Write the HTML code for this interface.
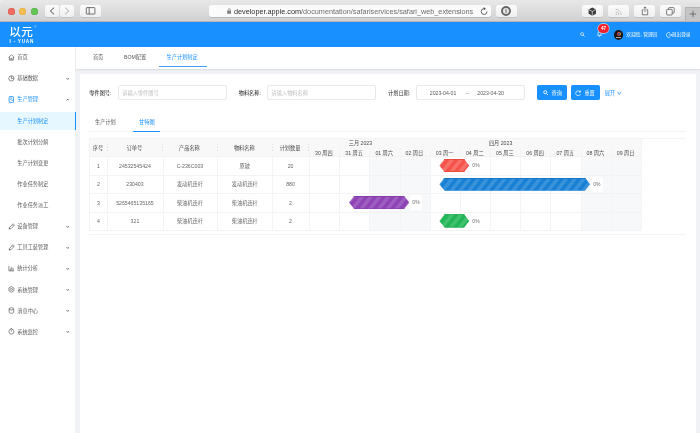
<!DOCTYPE html>
<html lang="zh-CN">
<head>
<meta charset="utf-8">
<title>生产计划制定</title>
<style>
*{box-sizing:border-box;margin:0;padding:0}
html,body{width:700px;height:433px;overflow:hidden;background:#f0f2f5}
body{position:relative;font-family:"Liberation Sans","Noto Sans CJK SC",sans-serif;font-size:5.2px;color:#595959;line-height:1}
.abs{position:absolute}
.t{position:absolute;white-space:nowrap;line-height:8px;height:8px;margin-top:-4px}
/* browser chrome */
#chrome{left:0;top:0;width:700px;height:21.6px;background:linear-gradient(#e9e8e9,#d2d1d2);border-bottom:.6px solid #b9b4ae;border-radius:2.5px 2.5px 0 0}
.tl{width:7.2px;height:7.2px;border-radius:50%;top:7.6px}
.cb{top:5.3px;height:11.7px;border-radius:2.2px;background:linear-gradient(#fbfbfb,#f0f0f0);box-shadow:0 .4px .5px rgba(0,0,0,.18)}
#url{left:208.9px;top:5.2px;width:281.8px;height:11.8px;border-radius:2.2px;background:#fbfbfb;box-shadow:0 .4px .5px rgba(0,0,0,.25)}
/* header */
#hdr{left:0;top:21.8px;width:700px;height:25px;background:#1890ff}
/* sidebar */
#side{left:0;top:46.8px;width:76.4px;height:387px;background:#fff;border-right:1px solid #f0f0f0}
.mi{position:absolute;left:0;width:76px;height:17.6px}
.mi .t{top:8.8px;left:17.3px;color:#595959}
.mi.sub .t{color:#595959}
.mi svg{position:absolute}
.arr{position:absolute;left:65.9px;top:7.1px;width:3.6px;height:3.6px}
/* top tabs */
#tabs{left:76.4px;top:46.8px;width:623.6px;height:22px;background:#fff;box-shadow:0 .5px 1.2px rgba(0,21,41,.1)}
#card{left:80.3px;top:74.4px;width:615.4px;height:360px;background:#fff}
.inp{position:absolute;top:85.4px;height:14.4px;border:1px solid #e9e9e9;border-radius:2px;background:#fff}
.btn{position:absolute;top:85.4px;height:14.4px;border-radius:1.8px;background:#1890ff}
.ph{color:#bfbfbf}
.lbl{color:#262626}
/* table */
.hl{position:absolute;background:#f3f3f3;height:1px}
.vl{position:absolute;background:#f4f4f4;width:1px}
.c{position:absolute;white-space:nowrap;line-height:8px;height:8px;margin-top:-4px;text-align:center;color:#666}
</style>
</head>
<body>
<div id="root" style="position:absolute;left:0;top:0;width:700px;height:433px;will-change:transform">
<!-- ===== Browser chrome ===== -->
<div id="chrome" class="abs"></div>
<div class="abs tl" style="left:7.6px;background:#ed6b5f;box-shadow:inset 0 0 0 .4px #d5584c"></div>
<div class="abs tl" style="left:19px;background:#f5be4f;box-shadow:inset 0 0 0 .4px #d9a43d"></div>
<div class="abs tl" style="left:30.8px;background:#62c554;box-shadow:inset 0 0 0 .4px #52a943"></div>
<div class="abs cb" style="left:45px;width:13.8px"></div>
<div class="abs cb" style="left:60px;width:14px"></div>
<svg class="abs" style="left:45px;top:5.3px" width="29" height="11.7" viewBox="0 0 29 11.7"><path d="M8.7 3 5.4 6.05 8.7 9.1" fill="none" stroke="#3c3c3c" stroke-width=".95" stroke-linecap="round" stroke-linejoin="round"/><path d="M20.5 3 23.8 6.05 20.5 9.1" fill="none" stroke="#a4a4a4" stroke-width=".95" stroke-linecap="round" stroke-linejoin="round"/></svg>
<div class="abs cb" style="left:80px;width:21px"></div>
<svg class="abs" style="left:80px;top:5.3px" width="21" height="11.7" viewBox="0 0 21 11.7"><rect x="6.3" y="2.6" width="8.6" height="6.5" rx=".7" fill="none" stroke="#444" stroke-width=".75"/><path d="M9.2 2.6v6.5" stroke="#444" stroke-width=".75"/></svg>
<div id="url" class="abs"></div>
<svg class="abs" style="left:226.8px;top:8.2px" width="4.6" height="6" viewBox="0 0 4.6 6"><rect x=".2" y="2.5" width="4.2" height="3.3" rx=".4" fill="#7d7d7d"/><path d="M1.1 2.6V1.8a1.2 1.2 0 0 1 2.4 0v.8" fill="none" stroke="#7d7d7d" stroke-width=".6"/></svg>
<div class="t" id="urltxt" style="left:234px;top:11.9px;font-size:7.27px;color:#2e2e2e;letter-spacing:0">developer.apple.com<span style="color:#6d6d6d">/documentation/safariservices/safari_web_extensions</span></div>
<svg class="abs" style="left:480.2px;top:6.6px" width="8.4" height="8.4" viewBox="0 0 7 7"><path d="M5.9 3.8A2.45 2.45 0 1 1 3.4 1.35" fill="none" stroke="#4c4c4c" stroke-width=".7"/><path d="M3.2 0 4.9 1.4 3.2 2.8z" fill="#4c4c4c"/></svg>
<div class="abs cb" style="left:496px;width:20.7px"></div>
<svg class="abs" style="left:501.4px;top:5.9px" width="10" height="10" viewBox="0 0 10 10"><circle cx="5" cy="5" r="4" fill="#e6e6e6" stroke="#676767" stroke-width="1.9"/><path d="M5 3.2v3.6" stroke="#4a4a4a" stroke-width=".8"/></svg>
<div class="abs cb" style="left:582px;width:21px"></div>
<div class="abs cb" style="left:608px;width:21px"></div>
<div class="abs cb" style="left:634px;width:21px"></div>
<div class="abs cb" style="left:660px;width:21px"></div>
<svg class="abs" style="left:588.3px;top:6.6px" width="8.6" height="9.2" viewBox="0 0 8.6 9.2"><path d="M4.3.4 8 2.4v4.4L4.3 8.8.6 6.8V2.4z" fill="#3d3d3d"/><path d="M.6 2.4 4.3 4.5 8 2.4M4.3 4.5v4.3" fill="none" stroke="#e6e6e6" stroke-width=".7"/></svg>
<svg class="abs" style="left:615px;top:7.6px" width="7.5" height="7.5" viewBox="0 0 7.5 7.5"><circle cx="1.3" cy="6.2" r=".8" fill="#b9b9b9"/><path d="M.6 3.7A3.2 3.2 0 0 1 3.8 6.9M.6 1.3A5.6 5.6 0 0 1 6.2 6.9" fill="none" stroke="#b9b9b9" stroke-width=".85"/></svg>
<svg class="abs" style="left:640.5px;top:6.2px" width="8" height="10" viewBox="0 0 8 10"><path d="M2.6 3.8H1.3v5h5.4v-5H5.4" fill="none" stroke="#4b4b4b" stroke-width=".7"/><path d="M4 6V1M2.5 2.3 4 .8l1.5 1.5" fill="none" stroke="#4b4b4b" stroke-width=".7"/></svg>
<svg class="abs" style="left:666px;top:7.2px" width="9" height="9" viewBox="0 0 9 9"><rect x=".6" y="2.4" width="5.6" height="5.6" rx=".8" fill="#f6f6f6" stroke="#4b4b4b" stroke-width=".7"/><path d="M2.6 2.4V1.4a.8.8 0 0 1 .8-.8h4a.8.8 0 0 1 .8.8v4a.8.8 0 0 1-.8.8H6.3" fill="none" stroke="#4b4b4b" stroke-width=".7"/></svg>
<div class="abs" style="left:685px;top:7px;width:15px;height:14.4px;background:#c6c5c6;border-left:.5px solid #b4b3b4;border-top:.5px solid #b4b3b4"></div>
<svg class="abs" style="left:688.5px;top:10.3px" width="8" height="8" viewBox="0 0 8 8"><path d="M4 .8v6.4M.8 4h6.4" stroke="#5a5a5a" stroke-width=".8"/></svg>

<!-- ===== App header ===== -->
<div id="hdr" class="abs"></div>
<div class="t" style="left:9.2px;top:32.2px;font-size:11.6px;font-weight:500;color:#fff;line-height:14px;height:14px;margin-top:-7px;letter-spacing:.4px">以元</div>
<div class="t" style="left:34.2px;top:26.7px;font-size:3px;color:#cfe6ff;line-height:4px;height:4px;margin-top:-2px">®</div>
<div class="t" style="left:9.6px;top:41.6px;font-size:4.7px;font-weight:700;color:#fff;letter-spacing:.72px;line-height:6px;height:6px;margin-top:-3px">I - YUAN</div>
<svg class="abs" style="left:580.3px;top:32px" width="5" height="5" viewBox="0 0 5 5"><circle cx="2" cy="2" r="1.5" fill="none" stroke="#fff" stroke-width=".6"/><path d="M3.1 3.1 4.6 4.6" stroke="#fff" stroke-width=".7"/></svg>
<svg class="abs" style="left:596.8px;top:31px" width="5" height="6" viewBox="0 0 5 6"><path d="M1 4.3V2.3a1.5 1.5 0 0 1 3 0v2M.5 4.4h4" fill="none" stroke="#fff" stroke-width=".7"/><path d="M2 5.3h1" stroke="#fff" stroke-width=".7"/></svg>
<div class="abs" style="left:598px;top:24.1px;width:11.2px;height:8.8px;border-radius:4.4px;background:#f5222d;box-shadow:0 0 0 .4px #fff"></div>
<div class="t" style="left:598px;width:11.2px;text-align:center;top:28.9px;font-size:4.6px;font-weight:700;color:#fff">47</div>
<div class="abs" style="left:614.1px;top:30.3px;width:9.2px;height:9.6px;border-radius:50%;background:#1d1418;overflow:hidden"><div class="abs" style="left:2.5px;top:1.5px;width:4.2px;height:4.2px;border-radius:50%;border:1px solid #d8372b;border-right-color:#d9a521;border-top-color:#e0662a;background:#2a4fb0"></div><div class="abs" style="left:2.2px;top:6.7px;width:4.8px;height:1.1px;background:#a9a9a9"></div></div>
<div class="t" style="left:626.2px;top:35px;color:#fff;font-size:4.8px">欢迎您, 管理员</div>
<svg class="abs" style="left:666.4px;top:31.6px" width="6" height="6" viewBox="0 0 5 5"><path d="M3.6 1A2 2 0 1 0 3.6 4" fill="none" stroke="#fff" stroke-width=".55"/><path d="M2.3 2.5h2.5M4 1.7l.8.8-.8.8" fill="none" stroke="#fff" stroke-width=".55"/></svg>
<div class="t" style="left:671.8px;top:35px;color:#fff;font-size:4.7px">退出登录</div>

<!-- ===== Sidebar ===== -->
<div id="side" class="abs">
  <div class="mi" style="top:1.6px"><svg style="left:8.2px;top:5.4px" width="6.8" height="6.8" viewBox="0 0 6 6"><path d="M.5 3 3 .7 5.5 3M1.2 2.6v2.8h3.6V2.6M2.4 5.4V3.9h1.2v1.5" fill="none" stroke="#5c5c5c" stroke-width=".6"/></svg><div class="t">首页</div></div>
  <div class="mi" style="top:22.7px"><svg style="left:8.2px;top:5.4px" width="6.8" height="6.8" viewBox="0 0 6 6"><circle cx="3" cy="3" r="2.3" fill="none" stroke="#5c5c5c" stroke-width=".6"/><path d="M3 .7V3h2.3" fill="none" stroke="#5c5c5c" stroke-width=".6"/></svg><div class="t">基础数据</div><svg class="arr" viewBox="0 0 4 4"><path d="M.6 1.3 2 2.7 3.4 1.3" fill="none" stroke="#444" stroke-width=".9"/></svg></div>
  <div class="mi" style="top:43.8px"><svg style="left:8.2px;top:5.2px" width="6.8" height="7.2" viewBox="0 0 6 6.4"><rect x="1" y=".5" width="3.8" height="5.4" rx=".5" fill="none" stroke="#1890ff" stroke-width=".7"/><path d="M2 1.8h1.8M2 3.1h1M3 4.7 4.6 3.1" fill="none" stroke="#1890ff" stroke-width=".7"/></svg><div class="t" style="color:#1890ff">生产管理</div><svg class="arr" viewBox="0 0 4 4"><path d="M.6 2.7 2 1.3 3.4 2.7" fill="none" stroke="#444" stroke-width=".9"/></svg></div>
  <div class="mi sub" style="top:65.2px;background:#e6f7ff;border-right:1.3px solid #1890ff"><div class="t" style="color:#1890ff">生产计划制定</div></div>
  <div class="mi sub" style="top:86.3px"><div class="t">批次计划分解</div></div>
  <div class="mi sub" style="top:107.4px"><div class="t">生产计划变更</div></div>
  <div class="mi sub" style="top:128.5px"><div class="t">作业任务制定</div></div>
  <div class="mi sub" style="top:149.6px"><div class="t">作业任务派工</div></div>
  <div class="mi" style="top:170.7px"><svg style="left:8.2px;top:5.4px" width="6.8" height="6.8" viewBox="0 0 6 6"><path d="M1.3 3.9 3.7 1.5 4.9 2.7 2.5 5.1 1 5.4z" fill="none" stroke="#5c5c5c" stroke-width=".6" stroke-linejoin="round"/><path d="M3.9 1.3 4.5.7 5.7 1.9 5.1 2.5" fill="none" stroke="#5c5c5c" stroke-width=".6"/><path d="M1.1 4.1 2.3 5.3 1 5.4z" fill="#5c5c5c"/></svg><div class="t">设备管理</div><svg class="arr" viewBox="0 0 4 4"><path d="M.6 1.3 2 2.7 3.4 1.3" fill="none" stroke="#444" stroke-width=".9"/></svg></div>
  <div class="mi" style="top:191.8px"><svg style="left:8.2px;top:5.4px" width="6.8" height="6.8" viewBox="0 0 6 6"><path d="M1.3 3.9 3.7 1.5 4.9 2.7 2.5 5.1 1 5.4z" fill="none" stroke="#5c5c5c" stroke-width=".6" stroke-linejoin="round"/><path d="M3.9 1.3 4.5.7 5.7 1.9 5.1 2.5" fill="none" stroke="#5c5c5c" stroke-width=".6"/><path d="M1.1 4.1 2.3 5.3 1 5.4z" fill="#5c5c5c"/></svg><div class="t">工具工装管理</div><svg class="arr" viewBox="0 0 4 4"><path d="M.6 1.3 2 2.7 3.4 1.3" fill="none" stroke="#444" stroke-width=".9"/></svg></div>
  <div class="mi" style="top:212.9px"><svg style="left:8.2px;top:5.4px" width="6.8" height="6.8" viewBox="0 0 6 6"><path d="M.8.8v4.4h4.6M2.1 5V3M3.3 5V1.8M4.5 5V2.6" fill="none" stroke="#5c5c5c" stroke-width=".6"/></svg><div class="t">统计分析</div><svg class="arr" viewBox="0 0 4 4"><path d="M.6 1.3 2 2.7 3.4 1.3" fill="none" stroke="#444" stroke-width=".9"/></svg></div>
  <div class="mi" style="top:234px"><svg style="left:8.2px;top:5.4px" width="6.8" height="6.8" viewBox="0 0 6 6"><path d="M3 .5 5.2 1.7v2.6L3 5.5.8 4.3V1.7z" fill="none" stroke="#5c5c5c" stroke-width=".6"/><circle cx="3" cy="3" r=".9" fill="none" stroke="#5c5c5c" stroke-width=".6"/></svg><div class="t">系统管理</div><svg class="arr" viewBox="0 0 4 4"><path d="M.6 1.3 2 2.7 3.4 1.3" fill="none" stroke="#444" stroke-width=".9"/></svg></div>
  <div class="mi" style="top:255.1px"><svg style="left:8.2px;top:5.4px" width="6.8" height="6.8" viewBox="0 0 6 6"><ellipse cx="3" cy="1.7" rx="2" ry="1" fill="none" stroke="#5c5c5c" stroke-width=".6"/><path d="M1 1.7v2.8c0 .6.9 1 2 1s2-.4 2-1V1.7" fill="none" stroke="#5c5c5c" stroke-width=".6"/></svg><div class="t">消息中心</div><svg class="arr" viewBox="0 0 4 4"><path d="M.6 1.3 2 2.7 3.4 1.3" fill="none" stroke="#444" stroke-width=".9"/></svg></div>
  <div class="mi" style="top:276.2px"><svg style="left:8.2px;top:5.4px" width="6.8" height="6.8" viewBox="0 0 6 6"><circle cx="3" cy="3.2" r="2.2" fill="none" stroke="#5c5c5c" stroke-width=".6"/><path d="M3 3.2V2M2.3.5h1.4" fill="none" stroke="#5c5c5c" stroke-width=".6"/></svg><div class="t">系统监控</div><svg class="arr" viewBox="0 0 4 4"><path d="M.6 1.3 2 2.7 3.4 1.3" fill="none" stroke="#444" stroke-width=".9"/></svg></div>
</div>

<!-- ===== Top tabs ===== -->
<div id="tabs" class="abs"></div>
<div class="t" style="left:92.9px;top:57.3px">首页</div>
<div class="t" style="left:124px;top:57.3px">BOM配置</div>
<div class="t" style="left:166.5px;top:57.3px;color:#1890ff">生产计划制定</div>
<div class="abs" style="left:158.7px;top:65.7px;width:48.3px;height:1px;background:#3fa0ff"></div>

<!-- ===== Card ===== -->
<div id="card" class="abs"></div>
<div class="t lbl" style="left:89.3px;top:92.8px">零件图号:</div>
<div class="inp" style="left:118px;width:108.6px"></div>
<div class="t ph" style="left:122.3px;top:92.8px">请输入零件图号</div>
<div class="t lbl" style="left:238.7px;top:92.8px">物料名称:</div>
<div class="inp" style="left:267.2px;width:108.4px"></div>
<div class="t ph" style="left:271.6px;top:92.8px">请输入物料名称</div>
<div class="t lbl" style="left:388px;top:92.8px">计划日期:</div>
<div class="inp" style="left:416.4px;width:108.8px"></div>
<div class="t" style="left:429.8px;top:92.8px">2023-04-01</div>
<div class="t" style="left:465.8px;top:92.8px;color:#8c8c8c">~</div>
<div class="t" style="left:477.3px;top:92.8px">2023-04-30</div>
<div class="btn" style="left:537.4px;width:29.8px"></div>
<svg class="abs" style="left:543.2px;top:89.8px" width="5.6" height="5.6" viewBox="0 0 5 5"><circle cx="2" cy="2" r="1.4" fill="none" stroke="#fff" stroke-width=".75"/><path d="M3.1 3.1 4.4 4.4" stroke="#fff" stroke-width=".85"/></svg>
<div class="t" style="left:551.5px;top:92.8px;color:#fff">查询</div>
<div class="btn" style="left:570.5px;width:29.8px"></div>
<svg class="abs" style="left:575.3px;top:89.7px" width="6.4" height="6.4" viewBox="0 0 5.4 5.4"><path d="M4.6 3.5A2.05 2.05 0 1 1 4.3 1.5" fill="none" stroke="#fff" stroke-width=".65"/><path d="M4.6.4v1.4H3.2" fill="none" stroke="#fff" stroke-width=".65"/></svg>
<div class="t" style="left:584.4px;top:92.8px;color:#fff">重置</div>
<div class="t" style="left:604.8px;top:92.8px;color:#1890ff">展开</div>
<svg class="abs" style="left:617.1px;top:90.6px" width="4.6" height="4.4" viewBox="0 0 4.6 4.4"><path d="M.5.8 2.3 3.5 4.1.8" fill="none" stroke="#1890ff" stroke-width=".75"/></svg>

<!-- inner tabs -->
<div class="t" style="left:95px;top:122.2px">生产计划</div>
<div class="t" style="left:139px;top:122.2px;color:#1890ff">甘特图</div>
<div class="hl" style="left:89.4px;top:131.2px;width:597px"></div>
<div class="abs" style="left:133px;top:130.6px;width:27.2px;height:1px;background:#1890ff"></div>

<!-- ===== Table / Gantt ===== -->
<div id="tbl" class="abs" style="left:0;top:0;width:700px;height:433px">
  <div class="abs" style="left:89.4px;top:138.2px;width:551.3px;height:18px;background:#f8f8f8"></div>
  <!-- weekend shading -->
  <div class="abs" style="left:369.4px;top:156.7px;width:60.4px;height:73.7px;background:#f7f8fa"></div>
  <div class="abs" style="left:580.5px;top:156.7px;width:60.2px;height:73.7px;background:#f7f8fa"></div>
  <!-- outer borders -->
  <div class="hl" style="left:89.4px;top:138.1px;width:597px"></div>
  <div class="hl" style="left:89.4px;top:233.8px;width:597px"></div>
  <div class="hl" style="left:89.4px;top:156px;width:551.3px"></div>
  <div class="hl" style="left:89.4px;top:175px;width:551.3px"></div>
  <div class="hl" style="left:89.4px;top:193px;width:551.3px"></div>
  <div class="hl" style="left:89.4px;top:211.6px;width:551.3px"></div>
  <div class="hl" style="left:89.4px;top:230px;width:551.3px"></div>
  <div class="vl" style="left:89.3px;top:138.2px;height:92.2px"></div>
  <div class="vl" style="left:107.4px;top:156.7px;height:73.7px"></div>
  <div class="vl" style="left:162.5px;top:156.7px;height:73.7px"></div>
  <div class="vl" style="left:217.3px;top:156.7px;height:73.7px"></div>
  <div class="vl" style="left:272.3px;top:156.7px;height:73.7px"></div>
  <div class="vl" style="left:308.8px;top:148.2px;height:82.2px"></div>
  <div class="vl" style="left:339.1px;top:148.2px;height:82.2px"></div>
  <div class="vl" style="left:369.3px;top:148.2px;height:82.2px"></div>
  <div class="vl" style="left:399.5px;top:148.2px;height:82.2px"></div>
  <div class="vl" style="left:429.7px;top:148.2px;height:82.2px"></div>
  <div class="vl" style="left:459.9px;top:148.2px;height:82.2px"></div>
  <div class="vl" style="left:490px;top:148.2px;height:82.2px"></div>
  <div class="vl" style="left:520.1px;top:148.2px;height:82.2px"></div>
  <div class="vl" style="left:550.3px;top:148.2px;height:82.2px"></div>
  <div class="vl" style="left:580.5px;top:148.2px;height:82.2px"></div>
  <div class="vl" style="left:610.6px;top:148.2px;height:82.2px"></div>
  <div class="vl" style="left:640.7px;top:138.2px;height:92.2px"></div>
  <!-- header cells -->
  <div class="c" style="left:89.4px;width:17px;top:147.5px;color:#4a4a4a">序号</div>
  <div class="abs" style="left:106.8px;top:144.2px;width:1px;height:1px;border-radius:50%;background:#d4d4d4;box-shadow:0 2.9px 0 #d4d4d4,0 5.8px 0 #d4d4d4"></div>
  <div class="c" style="left:107.4px;width:54.1px;top:147.5px;color:#4a4a4a">订单号</div>
  <div class="abs" style="left:161.9px;top:144.2px;width:1px;height:1px;border-radius:50%;background:#d4d4d4;box-shadow:0 2.9px 0 #d4d4d4,0 5.8px 0 #d4d4d4"></div>
  <div class="c" style="left:162.5px;width:53.8px;top:147.5px;color:#4a4a4a">产品名称</div>
  <div class="abs" style="left:216.7px;top:144.2px;width:1px;height:1px;border-radius:50%;background:#d4d4d4;box-shadow:0 2.9px 0 #d4d4d4,0 5.8px 0 #d4d4d4"></div>
  <div class="c" style="left:217.3px;width:54px;top:147.5px;color:#4a4a4a">物料名称</div>
  <div class="abs" style="left:271.7px;top:144.2px;width:1px;height:1px;border-radius:50%;background:#d4d4d4;box-shadow:0 2.9px 0 #d4d4d4,0 5.8px 0 #d4d4d4"></div>
  <div class="c" style="left:272.3px;width:35.5px;top:147.5px;color:#4a4a4a">计划数量</div>
  <div class="abs" style="left:308.2px;top:144.2px;width:1px;height:1px;border-radius:50%;background:#d4d4d4;box-shadow:0 2.9px 0 #d4d4d4,0 5.8px 0 #d4d4d4"></div>
  <div class="c" style="left:89.4px;width:18px;top:166px">1</div>
  <div class="c" style="left:107.4px;width:55.1px;top:166px">24532545424</div>
  <div class="c" style="left:162.5px;width:54.8px;top:166px">C-236C003</div>
  <div class="c" style="left:217.3px;width:55px;top:166px">原玻</div>
  <div class="c" style="left:272.3px;width:36.5px;top:166px">20</div>
  <div class="c" style="left:89.4px;width:18px;top:184.3px">2</div>
  <div class="c" style="left:107.4px;width:55.1px;top:184.3px">230403</div>
  <div class="c" style="left:162.5px;width:54.8px;top:184.3px">发动机连杆</div>
  <div class="c" style="left:217.3px;width:55px;top:184.3px">发动机连杆</div>
  <div class="c" style="left:272.3px;width:36.5px;top:184.3px">880</div>
  <div class="c" style="left:89.4px;width:18px;top:202.7px">3</div>
  <div class="c" style="left:107.4px;width:55.1px;top:202.7px">5265465135165</div>
  <div class="c" style="left:162.5px;width:54.8px;top:202.7px">柴油机连杆</div>
  <div class="c" style="left:217.3px;width:55px;top:202.7px">柴油机连杆</div>
  <div class="c" style="left:272.3px;width:36.5px;top:202.7px">2</div>
  <div class="c" style="left:89.4px;width:18px;top:221.1px">4</div>
  <div class="c" style="left:107.4px;width:55.1px;top:221.1px">321</div>
  <div class="c" style="left:162.5px;width:54.8px;top:221.1px">柴油机连杆</div>
  <div class="c" style="left:217.3px;width:55px;top:221.1px">柴油机连杆</div>
  <div class="c" style="left:272.3px;width:36.5px;top:221.1px">2</div>
  <!-- gantt header -->
  <div class="c" style="left:340.4px;width:40px;top:143px;color:#4a4a4a">三月 2023</div>
  <div class="c" style="left:480.6px;width:40px;top:143px;color:#4a4a4a">四月 2023</div>
  <div class="c" style="left:308.8px;width:30.2px;top:152.5px;color:#4a4a4a">30 周四</div>
  <div class="c" style="left:339px;width:30.2px;top:152.5px;color:#4a4a4a">31 周五</div>
  <div class="c" style="left:369.1px;width:30.2px;top:152.5px;color:#4a4a4a">01 周六</div>
  <div class="c" style="left:399.3px;width:30.2px;top:152.5px;color:#4a4a4a">02 周日</div>
  <div class="c" style="left:429.5px;width:30.2px;top:152.5px;color:#4a4a4a">03 周一</div>
  <div class="c" style="left:459.7px;width:30.2px;top:152.5px;color:#4a4a4a">04 周二</div>
  <div class="c" style="left:489.8px;width:30.2px;top:152.5px;color:#4a4a4a">05 周三</div>
  <div class="c" style="left:520px;width:30.2px;top:152.5px;color:#4a4a4a">06 周四</div>
  <div class="c" style="left:550.2px;width:30.2px;top:152.5px;color:#4a4a4a">07 周五</div>
  <div class="c" style="left:580.3px;width:30.2px;top:152.5px;color:#4a4a4a">08 周六</div>
  <div class="c" style="left:610.5px;width:30.2px;top:152.5px;color:#4a4a4a">09 周日</div>
  <!-- bars -->
  <div class="abs" style="left:439.4px;top:159.0px;width:29.9px;height:13.0px;background:linear-gradient(#ef4a42 0,#ef4a42 .5px,transparent .9px,transparent 12.1px,#ef4a42 12.5px,#ef4a42 100%),repeating-linear-gradient(128deg,#f4524a 0,#f4524a 1.75px,#f67167 2.3px,#f67167 5.2px,#f4524a 5.75px,#f4524a 6.93px);clip-path:polygon(5.2px 0,24.7px 0,29.9px 50%,24.7px 100%,5.2px 100%,0 50%)"></div>
  <div class="abs" style="left:469.7px;top:158.0px;width:12px;height:15.0px;background:#fff;border-radius:1.5px;opacity:.9"></div>
  <div class="c" style="left:469.7px;width:12.6px;top:165.2px;font-size:5px;color:#6e6e6e">0%</div>
  <div class="abs" style="left:439.4px;top:177.5px;width:150.7px;height:13.3px;background:linear-gradient(#1677c8 0,#1677c8 .5px,transparent .9px,transparent 12.4px,#1677c8 12.8px,#1677c8 100%),repeating-linear-gradient(128deg,#1a80d3 0,#1a80d3 1.75px,#3893db 2.3px,#3893db 5.2px,#1a80d3 5.75px,#1a80d3 6.93px);clip-path:polygon(5.2px 0,145.5px 0,150.7px 50%,145.5px 100%,5.2px 100%,0 50%)"></div>
  <div class="abs" style="left:590.5px;top:176.5px;width:12px;height:15.3px;background:#fff;border-radius:1.5px;opacity:.9"></div>
  <div class="c" style="left:590.5px;width:12.6px;top:183.8px;font-size:5px;color:#6e6e6e">0%</div>
  <div class="abs" style="left:349.0px;top:195.9px;width:60.3px;height:13.2px;background:linear-gradient(#853caa 0,#853caa .5px,transparent .9px,transparent 12.3px,#853caa 12.7px,#853caa 100%),repeating-linear-gradient(128deg,#8e44b5 0,#8e44b5 1.75px,#9e5dc1 2.3px,#9e5dc1 5.2px,#8e44b5 5.75px,#8e44b5 6.93px);clip-path:polygon(5.2px 0,55.1px 0,60.3px 50%,55.1px 100%,5.2px 100%,0 50%)"></div>
  <div class="abs" style="left:409.7px;top:194.9px;width:12px;height:15.2px;background:#fff;border-radius:1.5px;opacity:.9"></div>
  <div class="c" style="left:409.7px;width:12.6px;top:202.2px;font-size:5px;color:#6e6e6e">0%</div>
  <div class="abs" style="left:439.4px;top:214.3px;width:29.9px;height:13.3px;background:linear-gradient(#1cab50 0,#1cab50 .5px,transparent .9px,transparent 12.4px,#1cab50 12.8px,#1cab50 100%),repeating-linear-gradient(128deg,#21b557 0,#21b557 1.75px,#40c16e 2.3px,#40c16e 5.2px,#21b557 5.75px,#21b557 6.93px);clip-path:polygon(5.2px 0,24.7px 0,29.9px 50%,24.7px 100%,5.2px 100%,0 50%)"></div>
  <div class="abs" style="left:469.7px;top:213.3px;width:12px;height:15.3px;background:#fff;border-radius:1.5px;opacity:.9"></div>
  <div class="c" style="left:469.7px;width:12.6px;top:220.6px;font-size:5px;color:#6e6e6e">0%</div>
</div>
</div>
</body>
</html>
